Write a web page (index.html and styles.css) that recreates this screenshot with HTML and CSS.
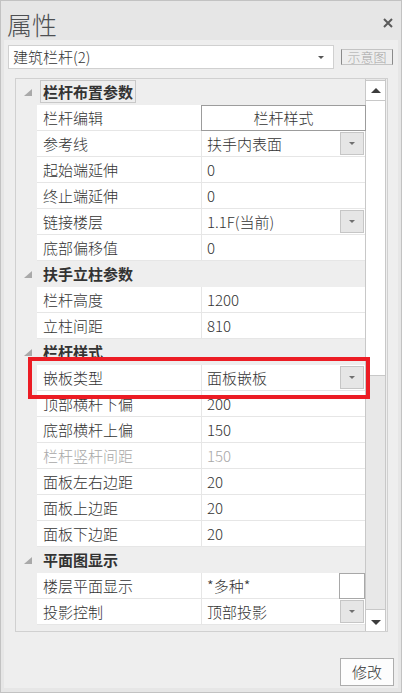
FILE: index.html
```html
<!DOCTYPE html>
<html lang="zh-CN">
<head>
<meta charset="utf-8">
<title>属性</title>
<link rel="stylesheet" href="styles.css">
</head>
<body>
<div class="window">
  <header class="titlebar">
    <h1 class="title">属性</h1>
    <svg class="close" width="10" height="10" viewBox="0 0 10 10"><path d="M1 1L9 9M9 1L1 9"/></svg>
  </header>
  <main class="panel">
    <div class="toolbar">
      <div class="select"><span>建筑栏杆(2)</span><i class="tri"></i></div>
      <button class="preview">示意图</button>
    </div>
    <div class="grid">
      <div class="rows">
        <div class="row cat"><span class="gutter"><i class="expander"></i></span><span class="cat-name"><span class="focused">栏杆布置参数</span></span></div>
        <div class="row"><span class="gutter"></span><span class="name">栏杆编辑</span><span class="value"><span class="btn-cell">栏杆样式</span></span></div>
        <div class="row"><span class="gutter"></span><span class="name">参考线</span><span class="value">扶手内表面<span class="drop"><i class="tri"></i></span></span></div>
        <div class="row"><span class="gutter"></span><span class="name">起始端延伸</span><span class="value">0</span></div>
        <div class="row"><span class="gutter"></span><span class="name">终止端延伸</span><span class="value">0</span></div>
        <div class="row"><span class="gutter"></span><span class="name">链接楼层</span><span class="value">1.1F(当前)<span class="drop"><i class="tri"></i></span></span></div>
        <div class="row"><span class="gutter"></span><span class="name">底部偏移值</span><span class="value">0</span></div>
        <div class="row cat"><span class="gutter"><i class="expander"></i></span><span class="cat-name">扶手立柱参数</span></div>
        <div class="row"><span class="gutter"></span><span class="name">栏杆高度</span><span class="value">1200</span></div>
        <div class="row"><span class="gutter"></span><span class="name">立柱间距</span><span class="value">810</span></div>
        <div class="row cat"><span class="gutter"><i class="expander"></i></span><span class="cat-name">栏杆样式</span></div>
        <div class="row"><span class="gutter"></span><span class="name">嵌板类型</span><span class="value">面板嵌板<span class="drop"><i class="tri"></i></span></span></div>
        <div class="row"><span class="gutter"></span><span class="name">顶部横杆下偏</span><span class="value">200</span></div>
        <div class="row"><span class="gutter"></span><span class="name">底部横杆上偏</span><span class="value">150</span></div>
        <div class="row disabled"><span class="gutter"></span><span class="name">栏杆竖杆间距</span><span class="value">150</span></div>
        <div class="row"><span class="gutter"></span><span class="name">面板左右边距</span><span class="value">20</span></div>
        <div class="row"><span class="gutter"></span><span class="name">面板上边距</span><span class="value">20</span></div>
        <div class="row"><span class="gutter"></span><span class="name">面板下边距</span><span class="value">20</span></div>
        <div class="row cat"><span class="gutter"><i class="expander"></i></span><span class="cat-name">平面图显示</span></div>
        <div class="row"><span class="gutter"></span><span class="name">楼层平面显示</span><span class="value">*多种*<span class="box"></span></span></div>
        <div class="row"><span class="gutter"></span><span class="name">投影控制</span><span class="value">顶部投影<span class="drop"><i class="tri"></i></span></span></div>
      </div>
      <div class="scrollbar">
        <span class="sb-btn up"><i class="arrow-up"></i></span>
        <span class="sb-thumb"></span>
        <span class="sb-btn down"><i class="arrow-down"></i></span>
      </div>
    </div>
    <div class="footer"><button class="modify">修改</button></div>
  </main>
  <div class="highlight"></div>
</div>
</body>
</html>
```
FILE: styles.css
```css
* { box-sizing: border-box; }
html, body { margin: 0; padding: 0; }
body {
  width: 402px;
  height: 693px;
  background: #e6e6e6;
  font-family: "Noto Sans CJK SC", sans-serif;
  font-weight: 300;
  color: #333;
  overflow: hidden;
}
.window {
  position: relative;
  width: 402px;
  height: 693px;
  border: 1px solid #c2c2c2;
  background: #e6e6e6;
}
.titlebar {
  height: 39px;
  display: flex;
  justify-content: space-between;
  align-items: flex-start;
}
.title {
  margin: 9px 0 0 6px;
  font-size: 25px;
  line-height: 28px;
  font-weight: 300;
  color: #4d4f52;
}
.close {
  margin: 17px 8px 0 0;
  fill: none;
  stroke: #5a5a5a;
  stroke-width: 2;
}
.panel {
  margin: 0 3px;
  height: 648px;
  background: #eeeeee;
  display: flex;
  flex-direction: column;
}
.toolbar {
  display: flex;
  align-items: center;
  padding: 5px 0 0 4px;
}
.select {
  width: 326px;
  height: 24px;
  background: #fff;
  border: 1px solid #d0d0d0;
  display: flex;
  align-items: center;
  justify-content: space-between;
  padding: 0 9px 0 4px;
  font-size: 15px;
  line-height: 22px;
  color: #333;
}
.select .tri { border-top-color: #555; }
.tri {
  display: block;
  width: 0;
  height: 0;
  border-left: 3px solid transparent;
  border-right: 3px solid transparent;
  border-top: 3px solid #707070;
}
.preview {
  margin-left: 7px;
  width: 52px;
  height: 16px;
  padding: 0;
  background: #eeeeee;
  border: 1px solid #c4c4c4;
  border-left-color: #8a8a8a;
  border-right-color: #8a8a8a;
  font-family: "Noto Sans CJK SC", sans-serif;
  font-weight: 300;
  font-size: 13px;
  line-height: 14px;
  color: #a6a6a6;
}
.grid {
  margin: 9px 0 0 11px;
  width: 373px;
  height: 554px;
  border: 1px solid #d0d0d0;
  display: flex;
  background: #eeeeee;
}
.rows {
  width: 349px;
  background: #eeeeee;
}
.row {
  display: grid;
  grid-template-columns: 21px 164px 164px;
  height: 26px;
  font-size: 15px;
  line-height: 25px;
}
.gutter {
  position: relative;
  background: #eeeeee;
}
.name, .value {
  background: #fff;
  border-bottom: 1px solid #e6e6e6;
  white-space: nowrap;
}
.name { padding-left: 6px; }
.value {
  position: relative;
  padding-left: 5px;
  border-left: 1px solid #e6e6e6;
}
.disabled .name, .disabled .value { color: #a8a8a8; }
.cat-name {
  grid-column: 2 / 4;
  padding-left: 6px;
  font-weight: 700;
  background: #eeeeee;
}
.focused {
  display: inline-block;
  margin: 1px 0 0 -3px;
  padding: 0 2px;
  height: 23px;
  line-height: 21px;
  border: 1px solid #c8c8c8;
}
.expander {
  position: absolute;
  left: 8px;
  top: 10px;
  width: 0;
  height: 0;
  border-left: 8px solid transparent;
  border-bottom: 7px solid #a9a9a9;
}
.btn-cell {
  position: absolute;
  left: -1px;
  top: 0;
  right: -1px;
  bottom: -1px;
  background: #fff;
  border: 1px solid #9c9c9c;
  text-align: center;
  line-height: 24px;
}
.drop {
  position: absolute;
  top: 1px;
  right: 1px;
  width: 24px;
  height: 23px;
  background: #e6e6e6;
  border: 1px solid #c6c6c6;
  display: flex;
  align-items: center;
  justify-content: center;
}
.box {
  position: absolute;
  top: 0;
  right: 0;
  width: 26px;
  height: 26px;
  background: #fff;
  border: 1px solid #a8a8a8;
}
.scrollbar {
  width: 21px;
  height: 552px;
  border-left: 1px solid #c8c8c8;
  border-right: 1px solid #c8c8c8;
  background: #e8e8e8;
  display: flex;
  flex-direction: column;
}
.sb-btn {
  display: flex;
  align-items: center;
  justify-content: center;
  background: #fff;
}
.sb-btn.up {
  margin-top: 1px;
  height: 21px;
  border-top: 1px solid #c8c8c8;
  border-bottom: 1px solid #c8c8c8;
}
.sb-thumb {
  height: 275px;
  background: #fff;
  border-bottom: 1px solid #c8c8c8;
}
.sb-btn.down {
  margin-top: auto;
  height: 22px;
  border-top: 1px solid #c8c8c8;
}
.arrow-up, .arrow-down {
  display: block;
  width: 0;
  height: 0;
  border-left: 5px solid transparent;
  border-right: 5px solid transparent;
}
.arrow-up { border-bottom: 5px solid #3c3c3c; }
.arrow-down { border-top: 5px solid #3c3c3c; margin-top: 3px; }
.footer {
  display: flex;
  justify-content: flex-end;
  padding: 26px 4px 0 0;
}
.modify {
  width: 54px;
  height: 28px;
  padding: 0;
  background: #fdfdfd;
  border: 1px solid #adadad;
  font-family: "Noto Sans CJK SC", sans-serif;
  font-weight: 300;
  font-size: 15px;
  line-height: 26px;
  color: #333;
}
.highlight {
  position: absolute;
  left: 27px;
  top: 356px;
  width: 342px;
  height: 42px;
  border: 4px solid #ec1c24;
}
```
